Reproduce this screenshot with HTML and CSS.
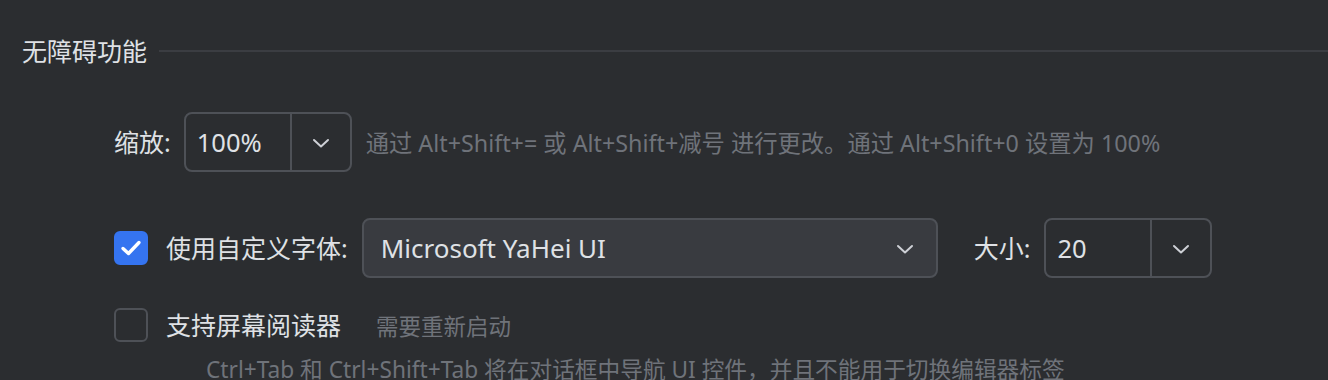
FILE: index.html
```html
<!DOCTYPE html>
<html lang="zh-CN">
<head>
<meta charset="utf-8">
<title>无障碍功能</title>
<link rel="stylesheet" href="styles.css">
</head>
<body>
<div class="page">
  <div class="title-row">
    <span class="title">无障碍功能</span>
    <span class="line"></span>
  </div>
  <div class="section">
    <div class="row zoom-row">
      <span class="label">缩放:</span>
      <div class="combo">
        <div class="combo-value">100%</div>
        <div class="combo-arrow">
          <svg width="18" height="10" viewBox="0 0 18 10"><path d="M2 2 L9 8.5 L16 2" fill="none" stroke="#ced0d6" stroke-width="2" stroke-linecap="round" stroke-linejoin="round"/></svg>
        </div>
      </div>
      <span class="hint">通过 Alt+Shift+= 或 Alt+Shift+减号 进行更改。通过 Alt+Shift+0 设置为 100%</span>
    </div>
    <div class="row font-row">
      <span class="checkbox checked">
        <svg width="22" height="18" viewBox="0 0 22 18"><path d="M3 9.5 L8.5 14.5 L19 3.5" fill="none" stroke="#ffffff" stroke-width="3.4" stroke-linecap="round" stroke-linejoin="round"/></svg>
      </span>
      <span class="label check-label">使用自定义字体:</span>
      <div class="font-combo">
        <span class="font-value">Microsoft YaHei UI</span>
        <svg width="18" height="10" viewBox="0 0 18 10"><path d="M2 2 L9 8.5 L16 2" fill="none" stroke="#ced0d6" stroke-width="2" stroke-linecap="round" stroke-linejoin="round"/></svg>
      </div>
      <span class="label size-label">大小:</span>
      <div class="combo">
        <div class="combo-value">20</div>
        <div class="combo-arrow">
          <svg width="18" height="10" viewBox="0 0 18 10"><path d="M2 2 L9 8.5 L16 2" fill="none" stroke="#ced0d6" stroke-width="2" stroke-linecap="round" stroke-linejoin="round"/></svg>
        </div>
      </div>
    </div>
    <div class="row reader-row">
      <span class="checkbox"></span>
      <span class="label check-label">支持屏幕阅读器</span>
      <span class="hint restart">需要重新启动</span>
    </div>
    <div class="note">Ctrl+Tab 和 Ctrl+Shift+Tab 将在对话框中导航 UI 控件，并且不能用于切换编辑器标签</div>
  </div>
</div>
</body>
</html>
```
FILE: styles.css
```css
html, body {
  margin: 0;
  padding: 0;
  background: #2b2d30;
  overflow: hidden;
}
body {
  font-family: "Noto Sans", "Noto Sans CJK SC", sans-serif;
  color: #dfe1e5;
  height: 380px;
}
.page {
  padding: 31px 0 0 22px;
}
.title-row {
  display: flex;
  align-items: center;
  height: 40px;
  gap: 12px;
}
.title {
  font-size: 25px;
  line-height: 40px;
  white-space: nowrap;
}
.line {
  flex: 1;
  height: 2px;
  background: #3b3d42;
}
.section {
  padding-left: 92px;
  margin-top: 41px;
}
.row {
  display: flex;
  align-items: center;
  height: 60px;
  white-space: nowrap;
}
.label {
  font-size: 25px;
  line-height: 32px;
}
.zoom-row .label {
  margin-right: 13px;
}
.combo {
  display: flex;
  width: 168px;
  height: 60px;
  box-sizing: border-box;
  border: 2px solid #4e5157;
  border-radius: 8px;
  flex-shrink: 0;
}
.combo-value {
  width: 106px;
  box-sizing: border-box;
  padding-left: 11px;
  display: flex;
  align-items: center;
  font-size: 25.5px;
  border-right: 2px solid #4e5157;
}
.combo-arrow {
  flex: 1;
  display: flex;
  align-items: center;
  justify-content: center;
  padding-top: 2px;
}
.hint {
  font-size: 23.3px;
  color: #6f737a;
  margin-left: 14px;
}
.font-row {
  margin-top: 46px;
}
.checkbox {
  width: 34px;
  height: 34px;
  box-sizing: border-box;
  border-radius: 6px;
  border: 2px solid #4e5157;
  display: flex;
  align-items: center;
  justify-content: center;
  flex-shrink: 0;
}
.checkbox.checked {
  background: #3574f0;
  border-color: #3574f0;
}
.check-label {
  margin-left: 18px;
}
.font-combo {
  margin-left: 14px;
  width: 576px;
  height: 60px;
  box-sizing: border-box;
  border: 2px solid #4e5157;
  border-radius: 8px;
  background: #393b40;
  display: flex;
  align-items: center;
  justify-content: space-between;
  padding: 0 22px 0 17px;
  flex-shrink: 0;
}
.font-value {
  font-size: 26px;
}
.font-combo svg {
  margin-top: 2px;
}
.size-label {
  margin-left: 36px;
  margin-right: 14px;
}
.reader-row {
  height: 34px;
  margin-top: 30px;
}
.restart {
  margin-left: 35px;
  font-size: 22.5px;
}
.note {
  margin-top: 14px;
  padding-left: 92px;
  font-size: 22.7px;
  line-height: 28px;
  color: #6f737a;
  white-space: nowrap;
}
```
